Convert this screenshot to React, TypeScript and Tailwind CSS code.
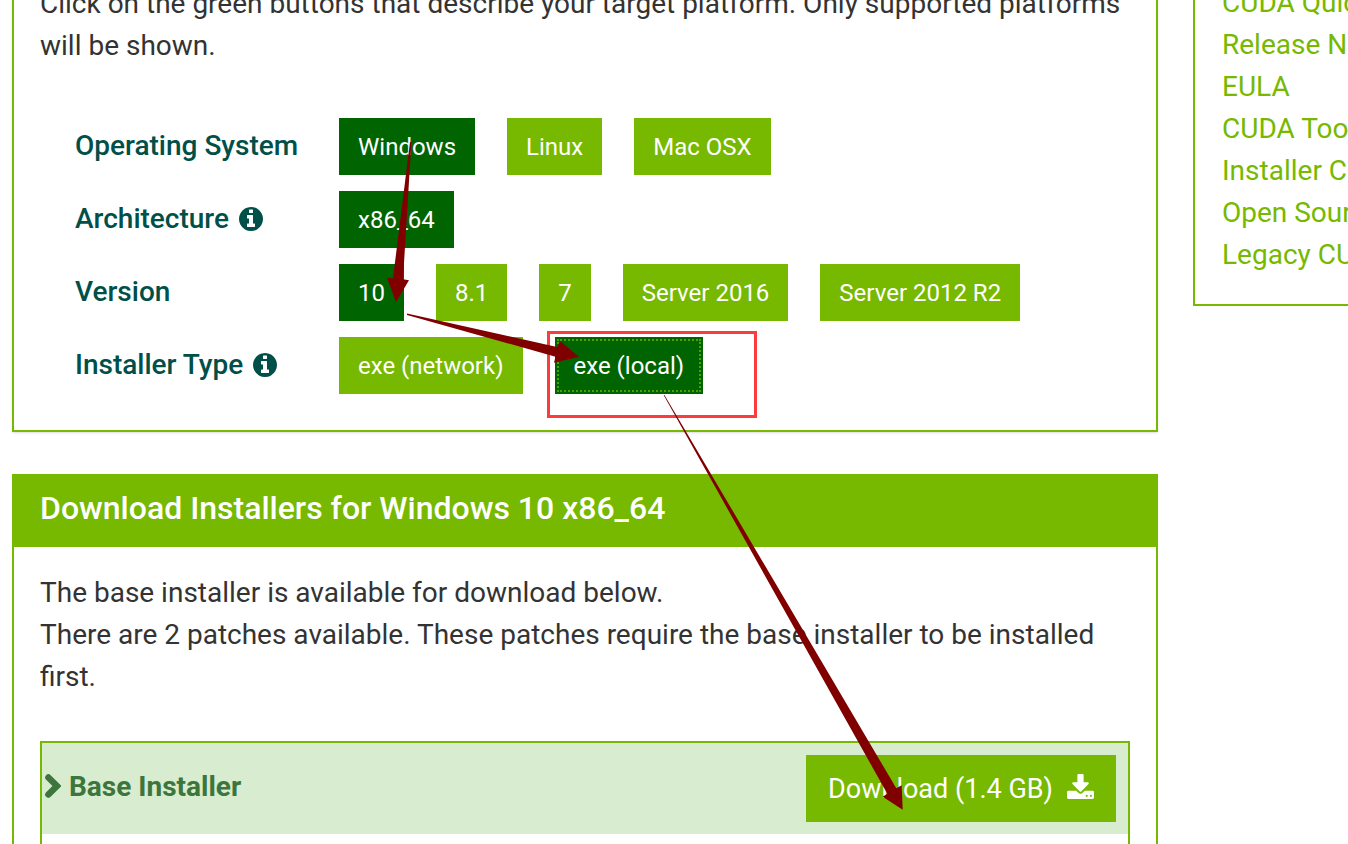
import type { ReactNode } from 'react'

const RESOURCES = [
  'CUDA Quick Start Guide',
  'Release Notes',
  'EULA',
  'CUDA Toolkit Overview',
  'Installer Checksums',
  'Open Source Packages',
  'Legacy CUDA Toolkits',
]

const ROWS = [
  { label: 'Operating System', info: false, options: ['Windows', 'Linux', 'Mac OSX'], selected: 'Windows' },
  { label: 'Architecture', info: true, options: ['x86_64'], selected: 'x86_64' },
  { label: 'Version', info: false, options: ['10', '8.1', '7', 'Server 2016', 'Server 2012 R2'], selected: '10' },
  { label: 'Installer Type', info: true, options: ['exe (network)', 'exe (local)'], selected: 'exe (local)' },
]

function InfoIcon() {
  return (
    <svg className="size-6 shrink-0" viewBox="128 128 1536 1536" fill="currentColor" aria-hidden="true">
      <path d="M1152 1376v-160q0-14-9-23t-23-9h-96v-512q0-14-9-23t-23-9h-320q-14 0-23 9t-9 23v160q0 14 9 23t23 9h96v320h-96q-14 0-23 9t-9 23v160q0 14 9 23t23 9h448q14 0 23-9t9-23zm-128-896v-160q0-14-9-23t-23-9h-192q-14 0-23 9t-9 23v160q0 14 9 23t23 9h192q14 0 23-9t9-23zm640 416q0 209-103 385.5t-279.5 279.5-385.5 103-385.5-103-279.5-279.5-103-385.5 103-385.5 279.5-279.5 385.5-103 385.5 103 279.5 279.5 103 385.5z" />
    </svg>
  )
}

function DownloadIcon() {
  return (
    <svg className="mb-1 h-[25px] w-[27px] shrink-0" viewBox="0 0 1664 1536" fill="currentColor" aria-hidden="true">
      <path d="M1280 1344q0-26-19-45t-45-19-45 19-19 45 19 45 45 19 45-19 19-45zm256 0q0-26-19-45t-45-19-45 19-19 45 19 45 45 19 45-19 19-45zm128-224v320q0 40-28 68t-68 28h-1472q-40 0-68-28t-28-68v-320q0-40 28-68t68-28h465l135 136q58 56 136 56t136-56l136-136h464q40 0 68 28t28 68zm-325-569q17 41-14 70l-448 448q-18 19-45 19t-45-19l-448-448q-31-29-14-70 17-39 59-39h256v-448q0-26 19-45t45-19h256q26 0 45 19t19 45v448h256q42 0 59 39z" />
    </svg>
  )
}

function ChevronIcon() {
  return (
    <svg className="mb-0.5 h-6 w-4 shrink-0" viewBox="0 0 16 24" fill="none" aria-hidden="true">
      <path d="M3.4 3.4 12 12l-8.6 8.6" stroke="currentColor" strokeWidth="6.4" strokeLinecap="round" />
    </svg>
  )
}

function Option({ active, focused, children }: { active: boolean; focused: boolean; children: ReactNode }) {
  return (
    <button
      type="button"
      aria-pressed={active}
      className={`relative h-[57px] px-[19px] text-2xl whitespace-nowrap text-white ${active ? 'bg-[#006400]' : 'bg-[#76b900]'}`}
    >
      {children}
      {focused && <span className="absolute inset-0.5 border-2 border-dotted border-[#76b900]/70" />}
    </button>
  )
}

// Hand-drawn markup lying over the page
function Annotations() {
  return (
    <svg className="pointer-events-none absolute top-0 left-0" width="1348" height="844" aria-hidden="true">
      <rect x="548.5" y="332.5" width="207" height="84" fill="none" stroke="#fa3c3c" strokeWidth="3" />
      <g fill="#800000">
        <path d="M410 142 393 278.3 387 277.7 396 302 409 280.3 403 279.3 411.4 142z" />
        <path d="M407 313.6 557 347 560 341 579 356.7 554 362.7 555.5 356.7 407 315z" />
        <path d="M663.6 395 887.3 793.7 882.7 796.7 902.7 809.7 901.7 785.3 896.3 788.3 664.4 395z" />
      </g>
    </svg>
  )
}

export default function App() {
  return (
    <div className="relative h-screen overflow-hidden bg-white font-['Roboto',sans-serif] text-[28px] leading-[42px] text-[#333]">
      <div className="-mt-5 grid grid-cols-[minmax(0,1fr)_155px] items-start gap-[35px] pl-3">
        <main>
          <section className="border-2 border-[#76b900] px-[26px] pt-px pb-9 shadow-sm">
            <p>
              Click on the green buttons that describe your target platform. Only supported platforms will be shown.
            </p>
            <div className="mt-[51px] flex flex-col gap-4 pl-[35px]">
              {ROWS.map((row) => (
                <div key={row.label} role="group" aria-label={row.label} className="flex items-center">
                  <div className="flex w-[264px] shrink-0 items-center gap-2.5 pb-0.5 font-medium text-[#004f49]">
                    {row.label}
                    {row.info && <InfoIcon />}
                  </div>
                  <div className="flex gap-8">
                    {row.options.map((option) => (
                      <Option key={option} active={option === row.selected} focused={option === 'exe (local)'}>
                        {option}
                      </Option>
                    ))}
                  </div>
                </div>
              ))}
            </div>
          </section>

          <section className="mt-[42px] border-2 border-[#76b900]">
            <h2 className="bg-[#76b900] px-[26px] pt-[11px] pb-[18px] text-[32px] font-medium text-white">
              Download Installers for Windows 10 x86_64
            </h2>
            <div className="px-[26px] pt-[25px] pb-10">
              <p>The base installer is available for download below.</p>
              <p>There are 2 patches available. These patches require the base installer to be installed first.</p>
              <div className="mt-[43px] border-2 border-[#76b900]">
                <div className="flex items-center justify-between bg-[#d8ecd0] py-3 pr-3 pl-[3px]">
                  <h3 className="flex items-center gap-2 pb-1 font-bold text-[#3c763d]">
                    <ChevronIcon />
                    Base Installer
                  </h3>
                  <button
                    type="button"
                    className="flex h-[67px] items-center gap-3.5 bg-[#76b900] px-[22px] text-[27px] text-white"
                  >
                    Download (1.4 GB)
                    <DownloadIcon />
                  </button>
                </div>
                <div className="h-24" />
              </div>
            </div>
          </section>
        </main>

        <aside className="border-2 border-r-0 border-[#76b900] pb-7 pl-[27px]">
          <ul>
            {RESOURCES.map((name) => (
              <li key={name} className="whitespace-nowrap text-[#76b900]">
                <a href="#">{name}</a>
              </li>
            ))}
          </ul>
        </aside>
      </div>
      <Annotations />
    </div>
  )
}
